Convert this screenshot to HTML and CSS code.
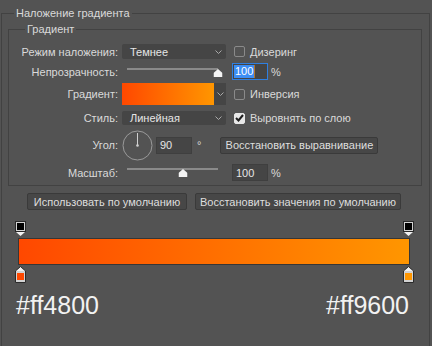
FILE: index.html
```html
<!DOCTYPE html>
<html lang="ru">
<head>
    <meta charset="UTF-8">
    <meta name="viewport" content="width=device-width, initial-scale=1.0">
    <title>Наложение градиента</title>
    <link rel="stylesheet" href="styles.css">
</head>
<body>

    <fieldset class="effect">
        <legend class="effect-title">Наложение градиента</legend>

        <fieldset class="group">
            <legend class="group-title">Градиент</legend>

            <div class="row row-blend">
                <span class="label">Режим наложения:</span>
                <div class="select">
                    <span class="select-value">Темнее</span>
                    <svg class="chevron" width="7" height="4" viewBox="0 0 7 4"><path d="M0.5 0.5 L3.5 3.5 L6.5 0.5" fill="none" stroke="#a9a9a9" stroke-width="1"/></svg>
                </div>
                <label class="check"><span class="box"></span>Дизеринг</label>
            </div>

            <div class="row row-opacity">
                <span class="label">Непрозрачность:</span>
                <div class="slider">
                    <div class="track"></div>
                    <svg class="thumb" style="left: 100%" width="9" height="8" viewBox="0 0 9 8"><path d="M4.5 0 L9 4 V8 H0 V4 Z" fill="#f4f4f4"/></svg>
                </div>
                <div class="field focused"><span class="selection">100</span><span class="caret"></span></div>
                <span class="unit">%</span>
            </div>

            <div class="row row-gradient">
                <span class="label">Градиент:</span>
                <div class="picker">
                    <div class="swatch"></div>
                    <svg class="chevron" width="7" height="4" viewBox="0 0 7 4"><path d="M0.5 0.5 L3.5 3.5 L6.5 0.5" fill="none" stroke="#a9a9a9" stroke-width="1"/></svg>
                </div>
                <label class="check"><span class="box"></span>Инверсия</label>
            </div>

            <div class="row row-style">
                <span class="label">Стиль:</span>
                <div class="select">
                    <span class="select-value">Линейная</span>
                    <svg class="chevron" width="7" height="4" viewBox="0 0 7 4"><path d="M0.5 0.5 L3.5 3.5 L6.5 0.5" fill="none" stroke="#a9a9a9" stroke-width="1"/></svg>
                </div>
                <label class="check">
                    <span class="box checked"><svg width="9" height="8" viewBox="0 0 9 8"><path d="M1 4 L3.5 6.5 L8 1" fill="none" stroke="#1e1e1e" stroke-width="2"/></svg></span>
                    Выровнять по слою
                </label>
            </div>

            <div class="row row-angle">
                <span class="label">Угол:</span>
                <svg class="dial" width="31" height="31" viewBox="0 0 31 31">
                    <circle cx="15.5" cy="15.5" r="14.5" fill="none" stroke="#9a9a9a" stroke-width="1"/>
                    <line x1="15.5" y1="3" x2="15.5" y2="15" stroke="#cfcfcf" stroke-width="1"/>
                    <circle cx="15.5" cy="15.5" r="1.3" fill="#cfcfcf"/>
                </svg>
                <div class="field"><span>90</span></div>
                <span class="degree">°</span>
                <button class="btn btn-align">Восстановить выравнивание</button>
            </div>

            <div class="row row-scale">
                <span class="label">Масштаб:</span>
                <div class="slider">
                    <div class="track"></div>
                    <svg class="thumb" style="left: 61%" width="9" height="8" viewBox="0 0 9 8"><path d="M4.5 0 L9 4 V8 H0 V4 Z" fill="#f4f4f4"/></svg>
                </div>
                <div class="field"><span>100</span></div>
                <span class="unit">%</span>
            </div>
        </fieldset>

        <div class="actions">
            <button class="btn btn-default">Использовать по умолчанию</button>
            <button class="btn btn-reset">Восстановить значения по умолчанию</button>
        </div>

        <div class="editor">
            <div class="stops">
                <svg width="11" height="15" viewBox="0 0 11 15">
                    <rect x="0.5" y="0.5" width="10" height="10" fill="#d2d2d2" stroke="#2a2a2a"/>
                    <rect x="2" y="2" width="7" height="7" fill="#000"/>
                    <path d="M1 11 H10 L5.5 15 Z" fill="#f2f2f2"/>
                </svg>
                <svg width="11" height="15" viewBox="0 0 11 15">
                    <rect x="0.5" y="0.5" width="10" height="10" fill="#d2d2d2" stroke="#2a2a2a"/>
                    <rect x="2" y="2" width="7" height="7" fill="#000"/>
                    <path d="M1 11 H10 L5.5 15 Z" fill="#f2f2f2"/>
                </svg>
            </div>
            <div class="bar"></div>
            <div class="stops">
                <svg width="11" height="17" viewBox="0 0 11 17">
                    <path d="M5.5 0.5 L10.5 5 V16.5 H0.5 V5 Z" fill="#d2d2d2" stroke="#2a2a2a"/>
                    <path d="M5.5 1.5 L9.5 5 H1.5 Z" fill="#f2f2f2"/>
                    <rect x="2" y="7" width="7" height="7" fill="#ff4800"/>
                </svg>
                <svg width="11" height="17" viewBox="0 0 11 17">
                    <path d="M5.5 0.5 L10.5 5 V16.5 H0.5 V5 Z" fill="#d2d2d2" stroke="#2a2a2a"/>
                    <path d="M5.5 1.5 L9.5 5 H1.5 Z" fill="#f2f2f2"/>
                    <rect x="2" y="7" width="7" height="7" fill="#ff9600"/>
                </svg>
            </div>
            <div class="hex-row">
                <span>#ff4800</span>
                <span>#ff9600</span>
            </div>
        </div>
    </fieldset>

</body>
</html>
```

FILE: styles.css
```css
html, body {
    overflow: hidden;
}

body {
    margin: 0;
    padding-top: 6px;
    background: #535353;
    font-family: "Liberation Sans", Arial, sans-serif;
    font-size: 11px;
    color: #dadada;
}

.effect {
    margin: 0 2px 0 1px;
    padding: 0 0 60px;
    border: 1px solid #424242;
    min-width: 0;
}

.effect-title {
    margin-left: 12px;
    padding: 0 2px;
    line-height: 15px;
}

.group {
    margin: 1px 7px 0 6px;
    padding: 5px 0 0;
    border: 1px solid #424242;
    min-width: 0;
}

.group-title {
    margin-left: 16px;
    padding: 0 2px;
    line-height: 15px;
}

.row {
    display: flex;
    align-items: center;
}

.row-blend { height: 19px; }
.row-opacity { height: 21px; }
.row-gradient { height: 24px; }
.row-style { height: 24px; }
.row-angle { height: 30px; }
.row-scale { height: 25px; }

.label {
    width: 109px;
    margin-right: 4px;
    text-align: right;
    white-space: nowrap;
}

.select {
    width: 104px;
    height: 15px;
    background: #454545;
    border-radius: 2px;
    display: flex;
    align-items: center;
    justify-content: space-between;
    padding: 0 4px 0 8px;
    box-sizing: border-box;
    color: #e6e6e6;
}

.row-style .select {
    height: 14px;
}

.check {
    display: flex;
    align-items: center;
    margin-left: 8px;
    white-space: nowrap;
}

.box {
    width: 11px;
    height: 11px;
    box-sizing: border-box;
    border: 1px solid #8a8a8a;
    border-radius: 2px;
    margin-right: 5px;
    display: flex;
    align-items: center;
    justify-content: center;
}

.box.checked {
    background: #e8e8e8;
    border-color: #e8e8e8;
}

.slider {
    position: relative;
    width: 91px;
    height: 10px;
    margin: 0 8px 0 5px;
    align-self: flex-start;
    margin-top: 7px;
}

.row-scale .slider {
    margin-top: 8px;
}

.track {
    height: 2px;
    background: #8a8a8a;
}

.thumb {
    position: absolute;
    top: 1px;
    transform: translateX(-50%);
}

.field {
    width: 36px;
    height: 17px;
    box-sizing: border-box;
    background: #454545;
    border: 1px solid #3f3f3f;
    margin-left: 6px;
    padding-left: 3px;
    display: flex;
    align-items: center;
    color: #e6e6e6;
}

.field.focused {
    border-color: #2f7fe0;
    padding-left: 1px;
}

.selection {
    background: #3d8ef5;
    color: #ffffff;
    padding: 0 1px;
    line-height: 13px;
}

.caret {
    width: 1px;
    height: 13px;
    background: #b6772c;
}

.unit {
    margin-left: 3px;
}

.picker {
    width: 104px;
    height: 22px;
    display: flex;
    align-items: center;
    background: #454545;
}

.swatch {
    width: 92px;
    height: 22px;
    background: linear-gradient(to right, #ff4800, #ff9600);
}

.picker .chevron {
    margin-left: 3px;
}

.dial {
    display: block;
}

.row-angle .field {
    margin-left: 3px;
}

.degree {
    margin-left: 5px;
    align-self: flex-start;
    margin-top: 9px;
}

.btn {
    height: 17px;
    padding: 0;
    background: #474747;
    border: 1px solid #3a3a3a;
    border-radius: 2px;
    color: #dedede;
    font-family: "Liberation Sans", Arial, sans-serif;
    font-size: 11px;
}

.btn-align {
    width: 158px;
    margin-left: 19px;
}

.actions {
    display: flex;
    gap: 8px;
    margin: 7px 0 0 25px;
}

.btn-default { width: 160px; }
.btn-reset { width: 206px; }

.editor {
    width: 399px;
    margin: 11px 0 0 13px;
}

.stops {
    display: flex;
    justify-content: space-between;
}

.stops svg {
    display: block;
}

.bar {
    height: 27px;
    margin: 2px 4px 1px 3px;
    box-sizing: border-box;
    border: 1px solid #363636;
    background: linear-gradient(to right, #ff4800, #ff9600);
}

.hex-row {
    display: flex;
    justify-content: space-between;
    margin-top: 8px;
    padding: 0 5px 0 1px;
    font-size: 25px;
    line-height: 29px;
    color: #f2f2f2;
}
```
